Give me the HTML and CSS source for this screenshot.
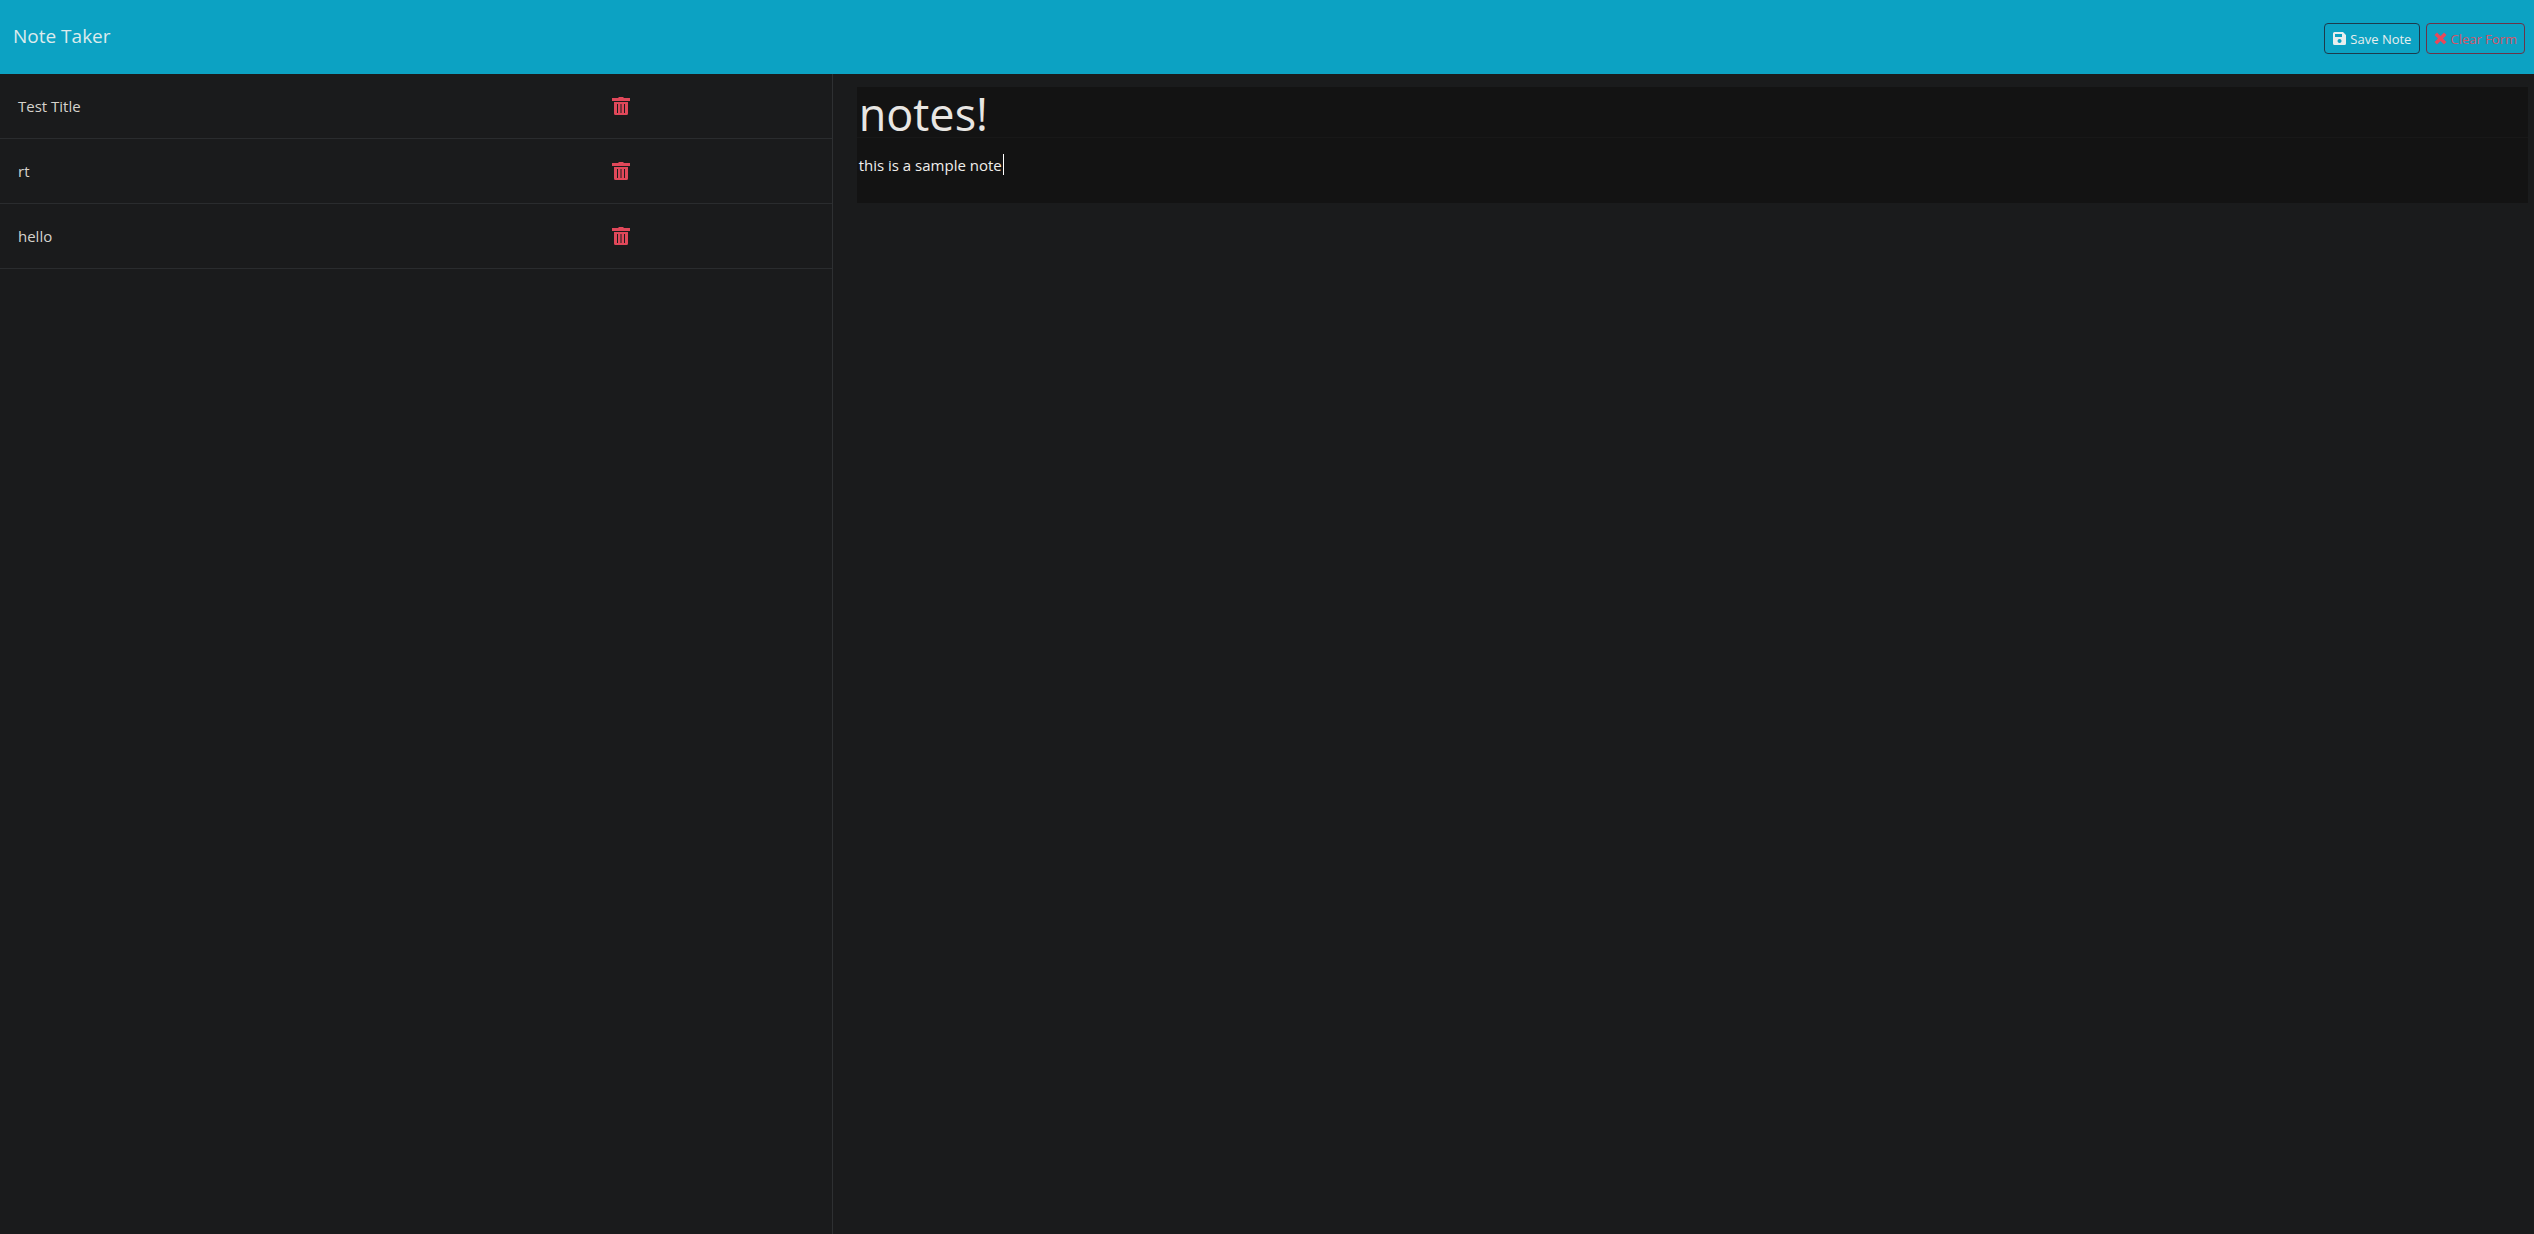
FILE: index.html
```html
<!DOCTYPE html>
<html lang="en">
<head>
<meta charset="utf-8">
<meta name="viewport" content="width=device-width, initial-scale=1">
<title>Note Taker</title>
<link rel="stylesheet" href="styles.css">
</head>
<body>
<svg class="sprite" aria-hidden="true">
  <symbol id="trash" viewBox="0 0 18 18">
    <path fill-rule="evenodd" d="M0 1h6L7 0h4l1 1h6v3H0zM2 5h14v11.500Q16 18 14.500 18h-11Q2 18 2 16.500zM5 7v9h1V7zM8.500 7v9h1V7zM12 7v9h1V7z"/>
  </symbol>
</svg>
<header class="navbar">
  <a class="brand" href="#">Note Taker</a>
  <div class="actions">
    <button class="btn save" type="button">
      <svg class="btn-icon" viewBox="0 0 13 13" aria-hidden="true"><path fill-rule="evenodd" d="M1.500 0H10l3 3v8.500Q13 13 11.500 13h-10Q0 13 0 11.500v-10Q0 0 1.500 0zM2 2v3h7V2zM6.500 7a2 2 0 1 0 .1 0z"/></svg>
      Save Note
    </button>
    <button class="btn clear" type="button">
      <svg class="btn-icon" viewBox="0 0 13 13" aria-hidden="true"><path d="M3 .5l3.500 3.500L10 .5 12.500 3 9 6.500l3.500 3.500-2.500 2.500L6.500 9 3 12.500.5 10 4 6.500.5 3z"/></svg>
      Clear Form
    </button>
  </div>
</header>
<main class="layout">
  <ul class="notes">
    <li class="note"><a class="note-title" href="#">Test Title</a><button class="delete" type="button" aria-label="Delete Test Title"><svg class="trash"><use href="#trash"/></svg></button></li>
    <li class="note"><a class="note-title" href="#">rt</a><button class="delete" type="button" aria-label="Delete rt"><svg class="trash"><use href="#trash"/></svg></button></li>
    <li class="note"><a class="note-title" href="#">hello</a><button class="delete" type="button" aria-label="Delete hello"><svg class="trash"><use href="#trash"/></svg></button></li>
  </ul>
  <section class="editor">
    <input class="title-field" type="text" aria-label="Note title" value="notes!">
    <div class="text-wrap">
      <textarea class="text-field" aria-label="Note text">this is a sample note</textarea>
      <span class="caret"></span>
    </div>
  </section>
</main>
</body>
</html>
```
FILE: styles.css
```css
* {
  box-sizing: border-box;
}

body {
  margin: 0;
  min-height: 100vh;
  display: flex;
  flex-direction: column;
  background: #1a1b1c;
  color: #d6d3cd;
  font: 15px/24px "Open Sans", "Noto Sans", sans-serif;
}

button,
input,
textarea {
  font-family: inherit;
}

.sprite {
  display: none;
}

.navbar {
  display: flex;
  justify-content: space-between;
  height: 74px;
  padding: 20px 9px 20px 13px;
  background: #0ca2c3;
}

.brand {
  color: #dcebed;
  font-size: 19px;
  line-height: 32px;
  text-decoration: none;
}

.actions {
  display: flex;
  gap: 6px;
  padding-top: 3px;
}

.btn {
  display: flex;
  align-items: center;
  gap: 4px;
  height: 31px;
  padding: 0 8px;
  border: 1px solid #1d3a4c;
  border-radius: 4px;
  background: transparent;
  color: #e8eeee;
  font-size: 13px;
  white-space: nowrap;
}

.btn-icon {
  width: 13px;
  height: 13px;
  fill: currentColor;
}

.clear {
  gap: 3px;
  padding: 0 7px;
  border-color: #6b3348;
  color: #d4566a;
}

.clear .btn-icon {
  fill: #e8485a;
}

.layout {
  flex: 1;
  display: grid;
  grid-template-columns: calc(33.333% - 12px) 1fr;
}

.notes {
  margin: 0;
  padding: 0;
  list-style: none;
  border-right: 1px solid #2e3032;
}

.note {
  display: flex;
  align-items: center;
  height: 65px;
  padding-left: 18px;
  border-bottom: 1px solid #2a2c2e;
}

.note-title {
  width: 73%;
  color: inherit;
  text-decoration: none;
}

.delete {
  padding: 0;
  border: 0;
  background: transparent;
}

.trash {
  display: block;
  width: 18px;
  height: 18px;
  fill: #e0485a;
}

.editor {
  padding: 13px 6px 0 24px;
}

.title-field,
.text-field {
  display: block;
  width: 100%;
  border: 0;
  outline: 0;
  background: #131313;
}

.title-field {
  height: 51px;
  padding: 3px 2px 0;
  border-bottom: 1px solid #181818;
  color: #e8e6e3;
  font-size: 45px;
}

.text-wrap {
  position: relative;
}

.text-field {
  height: 65px;
  padding: 15px 2px;
  color: #f0eeeb;
  font-size: 15px;
  line-height: 24px;
  resize: none;
}

.caret {
  position: absolute;
  top: 16px;
  left: 146px;
  width: 1px;
  height: 21px;
  background: #ffffff;
}
```
